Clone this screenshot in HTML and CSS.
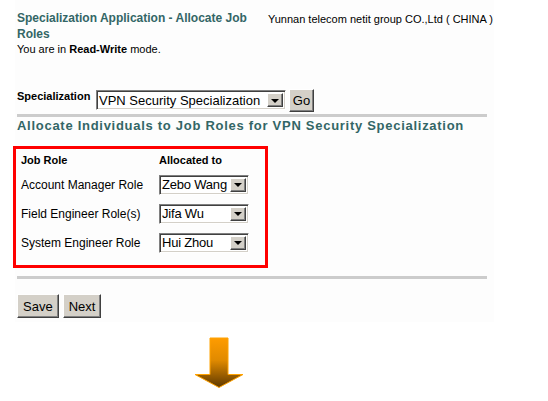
FILE: index.html
```html
<!DOCTYPE html>
<html>
<head>
<meta charset="utf-8">
<link rel="stylesheet" href="styles.css">
</head>
<body>
<div class="panel">
  <div class="header">
    <div class="title-block">
      <div class="title">Specialization Application - Allocate Job Roles</div>
      <div class="mode">You are in <b>Read-Write</b> mode.</div>
    </div>
    <div class="company">Yunnan telecom netit group CO.,Ltd ( CHINA )</div>
  </div>

  <form class="spec-row">
    <label class="spec-label">Specialization</label>
    <span class="dropdown dd-spec">
      <span class="dd-text">VPN Security Specialization</span>
      <span class="dd-btn"><span class="tri"></span></span>
    </span>
    <button type="button" class="btn btn-go">Go</button>
  </form>
  <div class="rule"></div>

  <h2 class="section">Allocate Individuals to Job Roles for VPN Security Specialization</h2>

  <div class="alloc-box">
    <div class="alloc-grid">
      <div class="col-head">Job Role</div>
      <div class="col-head">Allocated to</div>

      <div class="role">Account Manager Role</div>
      <span class="dropdown dd-person">
        <span class="dd-text">Zebo Wang</span>
        <span class="dd-btn"><span class="tri"></span></span>
      </span>

      <div class="role">Field Engineer Role(s)</div>
      <span class="dropdown dd-person">
        <span class="dd-text">Jifa Wu</span>
        <span class="dd-btn"><span class="tri"></span></span>
      </span>

      <div class="role">System Engineer Role</div>
      <span class="dropdown dd-person">
        <span class="dd-text">Hui Zhou</span>
        <span class="dd-btn"><span class="tri"></span></span>
      </span>
    </div>
  </div>

  <div class="rule rule-bottom"></div>

  <div class="actions">
    <button type="button" class="btn">Save</button>
    <button type="button" class="btn">Next</button>
  </div>
</div>

<div class="arrow">
  <svg width="50" height="52" viewBox="0 0 50 52">
    <defs>
      <linearGradient id="arrowFill" x1="0" y1="0" x2="0" y2="1">
        <stop offset="0" stop-color="#ff9c00"/>
        <stop offset="0.45" stop-color="#e08a00"/>
        <stop offset="1" stop-color="#5e3800"/>
      </linearGradient>
    </defs>
    <path d="M16 1 H34 V37.5 H49 L25 50.5 L1 37.5 H16 Z" fill="url(#arrowFill)" stroke="#ffa200" stroke-width="1"/>
  </svg>
</div>
</body>
</html>
```

FILE: styles.css
```css
body {
  margin: 0;
  background: #ffffff;
  font-family: "Liberation Sans", Arial, sans-serif;
  color: #000000;
}

.panel {
  margin-left: 15px;
  width: 479px;
  height: 322px;
  background: #fdfdfd;
  padding: 10px 0 0 2px;
  box-sizing: border-box;
}

.header {
  display: flex;
  align-items: flex-start;
}

.title-block {
  width: 251px;
}

.title {
  width: 236px;
  font-size: 12px;
  font-weight: bold;
  line-height: 16px;
  color: #336666;
}

.mode {
  font-size: 11px;
  line-height: 14px;
}

.company {
  font-size: 11px;
  line-height: 14px;
  padding-top: 2px;
}

.spec-row {
  display: flex;
  align-items: center;
  margin: 33px 0 0 0;
  height: 22px;
}

.spec-label {
  font-size: 11px;
  font-weight: bold;
  align-self: flex-start;
  margin-top: 1px;
  width: 79px;
}

.dropdown {
  position: relative;
  display: inline-flex;
  align-items: center;
  box-sizing: border-box;
  height: 20px;
  background: #ffffff;
  border-top: 1px solid #808080;
  border-left: 1px solid #808080;
  border-right: 1px solid #ffffff;
  border-bottom: 1px solid #ffffff;
  box-shadow: inset 1px 1px 0 #404040, inset -1px -1px 0 #d4d0c8;
  font-size: 13px;
  overflow: hidden;
}

.dd-text {
  padding-left: 2px;
  white-space: nowrap;
}

.dd-btn {
  position: absolute;
  right: 2px;
  top: 2px;
  width: 16px;
  height: 14px;
  box-sizing: border-box;
  background: #d4d0c8;
  border-top: 1px solid #ffffff;
  border-left: 1px solid #ffffff;
  border-right: 1px solid #404040;
  border-bottom: 1px solid #404040;
  box-shadow: inset -1px -1px 0 #808080;
  display: flex;
  align-items: center;
  justify-content: center;
}

.tri {
  width: 0;
  height: 0;
  border-left: 4px solid transparent;
  border-right: 4px solid transparent;
  border-top: 4px solid #000000;
  margin-top: 1px;
}

.dd-spec {
  width: 190px;
}

.dd-person {
  width: 90px;
}

.dd-person .dd-text {
  letter-spacing: -0.2px;
}

.btn {
  font-family: "Liberation Sans", Arial, sans-serif;
  font-size: 13px;
  color: #000000;
  background: #d4d0c8;
  box-sizing: border-box;
  height: 24px;
  padding: 0 5px;
  border-top: 1px solid #ffffff;
  border-left: 1px solid #ffffff;
  border-right: 1px solid #404040;
  border-bottom: 1px solid #404040;
  box-shadow: inset -1px -1px 0 #808080;
}

.btn-go {
  margin-left: 3px;
  width: 25px;
  height: 23px;
  padding: 0;
}

.rule {
  margin-top: 3px;
  width: 470px;
  height: 3px;
  background: #cccccc;
}

.section {
  margin: 1px 0 0 0;
  font-size: 13px;
  font-weight: bold;
  letter-spacing: 0.72px;
  color: #336666;
  line-height: 16px;
}

.alloc-box {
  margin: 12px 0 0 -4px;
  width: 255px;
  height: 122px;
  box-sizing: border-box;
  border: 3px solid #ff0000;
  padding: 0 0 0 5px;
}

.alloc-grid {
  display: grid;
  grid-template-columns: 138px 90px;
  grid-template-rows: 21px;
  grid-auto-rows: 29px;
  align-items: center;
}

.col-head {
  font-size: 11px;
  font-weight: bold;
}

.role {
  font-size: 12px;
}

.rule-bottom {
  margin-top: 8px;
}

.actions {
  display: flex;
  gap: 4px;
  margin-top: 15px;
}

.arrow {
  margin: 15px 0 0 194px;
  line-height: 0;
}
```
